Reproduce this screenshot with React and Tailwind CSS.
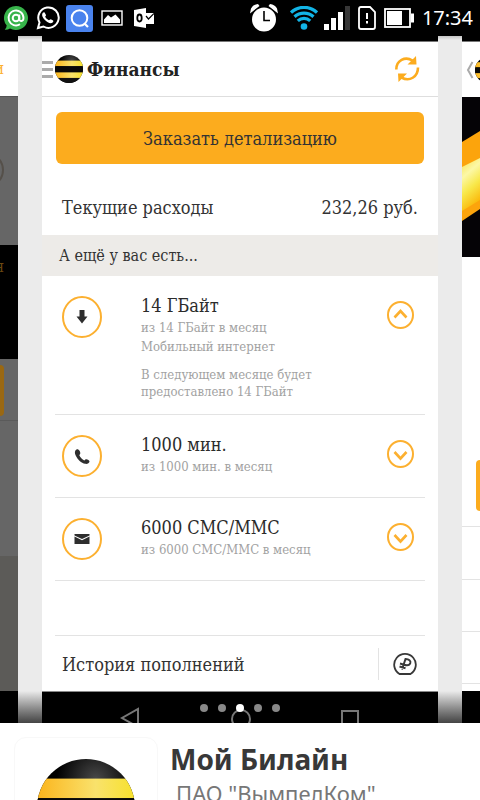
import React, { useState } from "react";

const serif = "font-['DejaVu_Serif_Condensed','Liberation_Serif',serif]";

const items = [
  {
    icon: "data",
    title: "14 ГБайт",
    lines: ["из 14 ГБайт в месяц", "Мобильный интернет"],
    note: ["В следующем месяце будет", "предоставлено 14 ГБайт"],
  },
  { icon: "phone", title: "1000 мин.", lines: ["из 1000 мин. в месяц"] },
  { icon: "mail", title: "6000 СМС/ММС", lines: ["из 6000 СМС/ММС в месяц"] },
];

const BeeLogo = ({ className, id }) => (
  <svg viewBox="0 0 100 100" className={className} aria-hidden="true">
    <defs>
      <clipPath id={`${id}-clip`}>
        <circle cx="50" cy="50" r="50" />
      </clipPath>
      <linearGradient id={`${id}-yellow`}>
        <stop offset="0" stopColor="#fbb41c" />
        <stop offset="0.6" stopColor="#f9e26c" />
        <stop offset="1" stopColor="#f7e12c" />
      </linearGradient>
      <radialGradient id={`${id}-black`} cx="0.6" cy="0.2" r="0.4">
        <stop offset="0" stopColor="#484848" />
        <stop offset="1" stopColor="#000" />
      </radialGradient>
    </defs>
    <g clipPath={`url(#${id}-clip)`}>
      <rect width="100" height="100" fill={`url(#${id}-black)`} />
      <rect y="20" width="100" height="20" fill={`url(#${id}-yellow)`} />
      <rect y="40" width="100" height="22" fill="#080808" />
      <rect y="62" width="100" height="20" fill={`url(#${id}-yellow)`} />
      <rect y="82" width="100" height="18" fill="#111" />
    </g>
  </svg>
);

const StatusBar = () => (
  <header className="flex h-9 shrink-0 items-center justify-between bg-black pl-1 pr-[7px] text-white">
    <div className="flex items-center">
      <svg viewBox="0 0 24 24" className="size-6" aria-hidden="true">
        <path d="M12 0a12 12 0 1 1-6 22.4Q3.500 24 .7 23.600 2.700 21.500 2.700 19.500A12 12 0 0 1 12 0z" fill="#37b34a" />
        <circle cx="12" cy="12" r="3.300" fill="none" stroke="#fff" strokeWidth="2" />
        <path d="M15.300 8.500v4.500c0 3 4.200 2.800 4.200-1a7.500 7.500 0 1 0-3.500 6.300" fill="none" stroke="#fff" strokeWidth="1.900" />
      </svg>
      <svg viewBox="0 0 24 24" className="ml-2 size-6" aria-hidden="true">
        <path d="M2 22l1.500-5.600A10.200 10.200 0 1 1 7.500 20.500z" fill="none" stroke="#fff" strokeWidth="2" />
        <path d="M8.600 6.500c-.5-.5-1.200-.3-1.700.3-1.600 1.900-.5 4.700 2 7.300 2.700 2.700 5.800 4 7.700 2.400.7-.6 1-1.500.5-2l-2.300-1.300c-.5-.2-1.400 1-1.900 1-1.500-.5-3.200-2.100-3.700-3.600 0-.4 1-1 .8-1.700z" fill="#fff" />
      </svg>
      <svg viewBox="0 0 27 27" className="ml-1.5 size-[27px]" aria-hidden="true">
        <rect width="27" height="27" rx="3" fill="#4a83ee" />
        <circle cx="13.500" cy="13" r="7.800" fill="none" stroke="#fff" strokeWidth="2" />
        <path d="M18.500 18.500l3.500 3.500" stroke="#fff" strokeWidth="2.200" />
      </svg>
      <svg viewBox="0 0 22 16" className="ml-2 h-4 w-[22px]" aria-hidden="true">
        <rect x="1" y="1" width="20" height="14" fill="none" stroke="#fff" strokeWidth="1.400" />
        <path d="M3 13v-3.500l4-4.500 3 2.500 4.500-3 4.500 5v3.500z" fill="#fff" />
      </svg>
      <svg viewBox="0 0 20 20" className="ml-[11px] size-5" aria-hidden="true">
        <path d="M0 2l12-2v20L0 18z" fill="#fff" />
        <ellipse cx="5.500" cy="10" rx="2.200" ry="3.500" fill="none" stroke="#000" strokeWidth="1.800" />
        <path d="M12 5h8v11h-8z" fill="#fff" />
        <path d="M12 8l2.500 3L20 5.500" fill="none" stroke="#000" strokeWidth="1.200" />
      </svg>
    </div>
    <div className="flex items-center">
      <svg viewBox="0 0 28 28" className="size-7" aria-hidden="true">
        <path d="M0 9.500L1 4.500Q3 .5 8 0l1.500 2zM28 9.500L27 4.500Q25 .5 20 0l-1.500 2z" fill="#fff" />
        <circle cx="14" cy="15.500" r="13" fill="#000" />
        <circle cx="14" cy="15.500" r="12" fill="#fff" />
        <path d="M14 7v9.500h6" fill="none" stroke="#000" strokeWidth="1.600" />
      </svg>
      <svg viewBox="0 0 28 24" className="ml-3 h-6 w-7" fill="none" stroke="#12b4e6" strokeWidth="3.200" aria-hidden="true">
        <path d="M1 6.500a19 19 0 0 1 26 0M4.500 10.800a14 14 0 0 1 19 0M7.800 14.800a9 9 0 0 1 12.400 0" />
        <circle cx="14" cy="20.500" r="3.300" fill="#12b4e6" stroke="none" />
      </svg>
      <svg viewBox="0 0 26 24" className="ml-1.5 h-6 w-[26px]" fill="#fff" aria-hidden="true">
        <path d="M0 18h5v6H0zM7 12h5v12H7zM14 6h5v18h-5z" />
        <path d="M21 0h5v24h-5z" fill="#373737" />
      </svg>
      <svg viewBox="0 0 18 24" className="ml-2 h-6 w-[18px]" fill="none" stroke="#fff" aria-hidden="true">
        <path d="M3 1h9l5 5v15q0 2-2 2H3q-2 0-2-2V3q0-2 2-2z" strokeWidth="1.800" />
        <path d="M9 7v6M9 15v2.500" strokeWidth="2" />
      </svg>
      <svg viewBox="0 0 30 20" className="ml-2 h-5 w-[30px]" aria-hidden="true">
        <rect x="1" y="1" width="25" height="18" fill="none" stroke="#fff" strokeWidth="1.800" />
        <path d="M3 3h15v14H3zM27 5.500h3v9h-3z" fill="#fff" />
      </svg>
      <time className="ml-2 font-['Noto_Sans',sans-serif] text-xl leading-6">17:34</time>
    </div>
  </header>
);

const ItemIcon = ({ name }) => (
  <svg viewBox="0 0 40 42" className="mt-5 h-[42px] w-10 shrink-0" aria-hidden="true">
    <ellipse cx="20" cy="21" rx="19" ry="20" fill="#fff" stroke="#fcb030" strokeWidth="2" />
    {name === "data" && <path d="M17.500 14h5v6.500h3L20 27.500l-5.500-7h3z" fill="#2e2e2e" />}
    {name === "phone" && (
      <path d="M14.500 14.500c-2 1-2 3.500-.8 6 2 4.200 5.500 7.500 9.500 8.300 2 .4 4-.4 4.300-2.200.1-1.500-2.500-2.800-3.800-2.400l-1.400 1.200c-2-.8-4.200-3-5-5.100l1-1.700c.3-1.700-1.600-5-3.800-4.100z" fill="#2e2e2e" />
    )}
    {name === "mail" && (
      <g fill="#2e2e2e">
        <path d="M12.500 16h15v1.500L20 21l-7.500-3.500z" />
        <path d="M12.500 18.500L20 22.300l7.500-3.800V26h-15z" />
      </g>
    )}
  </svg>
);

const ItemRow = ({ item, open, onToggle }) => (
  <li className="mx-[13px] flex min-h-[83px] items-start border-b border-[#e3e3e3] pl-[7px] pr-[11px]">
    <ItemIcon name={item.icon} />
    <div className="ml-[39px] flex-1 pt-[18px] pb-3.5">
      <h3 className="text-lg leading-6 text-[#2b2b2b]">{item.title}</h3>
      {item.lines.map((line) => (
        <p key={line} className="text-[13px] leading-[19px] text-[#a2a2a2]">{line}</p>
      ))}
      {open && item.note && (
        <div className="mt-2.5 text-[13px] leading-[17px] text-[#a2a2a2]">
          {item.note.map((line) => (
            <p key={line}>{line}</p>
          ))}
        </div>
      )}
    </div>
    <button type="button" aria-label={item.title} aria-expanded={open} onClick={onToggle} className="mt-[25px] shrink-0">
      <svg viewBox="0 0 27 28" className="h-7 w-[27px]" fill="none" stroke="#fcb030" aria-hidden="true">
        <ellipse cx="13.500" cy="14" rx="12.500" ry="13" strokeWidth="2" />
        <path d={open ? "M7.500 16.500l6-6.500 6 6.500" : "M7.500 12l6 6.500 6-6.500"} strokeWidth="2.600" />
      </svg>
    </button>
  </li>
);

const PrevSlide = () => (
  <div className={`flex w-[18px] shrink-0 flex-col overflow-hidden bg-[#666] ${serif}`}>
    <div className="h-1.5 border-b border-[#777] bg-black" />
    <div className="flex h-[55px] items-center justify-end border-b border-[#555] bg-white pr-3.5 text-base text-[#fcb030]">и</div>
    <div className="h-[148px] pt-14">
      <svg viewBox="0 0 18 34" className="h-[34px] w-[18px]" fill="none" stroke="#55504a" strokeWidth="2" aria-hidden="true">
        <circle cx="-14" cy="17" r="17" />
      </svg>
    </div>
    <div className="flex h-[114px] justify-end bg-black pt-2.5 pr-3.5 text-base text-[#6b4810]">я</div>
    <div className="h-[62px] border-b border-[#5a5a5a] pt-1.5">
      <div className="h-[51px] w-1 rounded-r bg-[#9a6812]" />
    </div>
    <div className="h-[135px]" />
    <div className="flex-1 bg-[#5c5b58]" />
    <div className="h-8 bg-black" />
  </div>
);

const NextSlide = () => (
  <div className="flex w-[18px] shrink-0 flex-col overflow-hidden bg-white">
    <div className="h-1.5 border-b border-[#777] bg-black" />
    <div className="flex h-[55px] items-center pl-1">
      <svg viewBox="0 0 8 18" className="h-[18px] w-2 shrink-0" fill="none" stroke="#aaa" strokeWidth="2" aria-hidden="true">
        <path d="M6.500 1L2 9l4.500 8" />
      </svg>
      <BeeLogo id="next" className="ml-px size-[26px] shrink-0" />
    </div>
    <svg viewBox="0 0 18 160" className="h-40 w-[18px] shrink-0 bg-[#050306]" aria-hidden="true">
      <defs>
        <linearGradient id="beam" x1="0" y1="0" x2="0.3" y2="1">
          <stop offset="0" stopColor="#f9e24d" />
          <stop offset="0.35" stopColor="#fcf8a6" />
          <stop offset="0.65" stopColor="#f8e84a" />
          <stop offset="1" stopColor="#fbb90c" />
        </linearGradient>
      </defs>
      <path d="M0 45L18 34v78L0 124z" fill="#fca40c" />
      <path d="M0 70L18 61v42L0 114z" fill="url(#beam)" />
    </svg>
    <div className="h-[270px] border-b border-[#e3e3e3] pt-[203px]">
      <div className="ml-3.5 h-[51px] rounded-l bg-[#fcac1e]" />
    </div>
    <div className="h-[53px] border-b border-[#e3e3e3]" />
    <div className="h-[52px] border-b border-[#e3e3e3]" />
    <div className="h-[52px] border-b border-[#e3e3e3]" />
    <div className="flex-1" />
    <div className="h-8 bg-black" />
  </div>
);

const Gutter = () => (
  <div className="flex w-6 shrink-0 flex-col justify-between bg-[#ebebeb]">
    <div className="h-1 bg-linear-to-b from-[#c4c4c4] to-[#ebebeb]" />
    <div className="h-8 bg-linear-to-b from-[#ebebeb] to-[#444]" />
  </div>
);

const FinanceScreen = () => {
  const [openItem, setOpenItem] = useState("14 ГБайт");

  return (
    <section className={`min-w-0 flex-1 bg-white text-[#333] ${serif}`}>
      <div className="h-1.5 border-b border-[#777] bg-black" />
      <div className="flex h-[55px] items-center border-b border-[#dedede] pr-[18px]">
        <button type="button" aria-label="Меню" className="flex w-[11px] flex-col gap-1">
          <span className="h-[3px] bg-[#aaa]" />
          <span className="h-[3px] bg-[#aaa]" />
          <span className="h-[3px] bg-[#aaa]" />
        </button>
        <BeeLogo id="head" className="ml-0.5 size-7" />
        <h1 className="ml-1 text-[19px] font-bold text-[#222]">Финансы</h1>
        <button type="button" aria-label="Обновить" className="ml-auto">
          <svg viewBox="0 0 26 28" className="h-7 w-[26px]" fill="none" stroke="#fcac1e" strokeWidth="2.600" aria-hidden="true">
            <path d="M2.300 14.500C2.300 5.500 11 1 18.500 5.500M24 12.500C24 22 15.500 27 7.500 22.500" />
            <path d="M22 1l.5 8.500H13.500zM4.500 27L4 18.500h9z" fill="#fcac1e" stroke="none" />
          </svg>
        </button>
      </div>

      <div className="px-3.5 pt-[15px]">
        <button type="button" className="h-[52px] w-full rounded-md bg-[#fcac1e] pt-0.5 text-lg">
          Заказать детализацию
        </button>
      </div>
      <div className="flex h-[71px] items-center justify-between pl-5 pr-5 pt-4 text-lg">
        <span>Текущие расходы</span>
        <span>232,26 руб.</span>
      </div>
      <h2 className="flex h-[41px] items-center bg-[#edebe8] pl-[17px] text-base">А ещё у вас есть...</h2>

      <ul className="pb-[54px]">
        {items.map((item) => (
          <ItemRow
            key={item.title}
            item={item}
            open={openItem === item.title}
            onToggle={() => setOpenItem(openItem === item.title ? null : item.title)}
          />
        ))}
      </ul>

      <div className="mx-[13px] flex h-14 items-center border-t border-[#e3e3e3] pl-[7px] pr-2">
        <span className="flex-1 pt-0.5 text-lg">История пополнений</span>
        <span className="h-8 w-px bg-[#e3e3e3]" />
        <button type="button" aria-label="Пополнить" className="ml-3.5">
          <svg viewBox="0 0 24 24" className="size-6" fill="none" stroke="#383838" strokeWidth="1.800" aria-hidden="true">
            <path d="M6.500 22a10.800 10.800 0 1 1 11 0z" />
            <path d="M9 17.500L12.500 7c3.500.3 5.500 1.500 4.800 4-.7 2.300-3 2.700-6.300 1.700l-4-1.200M6.500 14.500l6 1.800" strokeWidth="2" />
          </svg>
        </button>
      </div>

      <div className="flex h-8 items-start justify-between border-t border-[#888] bg-black pl-[78px] pr-[79px] pt-[15px]">
        <svg viewBox="0 0 20 16" className="h-4 w-5" fill="none" stroke="#777" strokeWidth="2" aria-hidden="true">
          <path d="M18 20V2L2 11l16 9" />
        </svg>
        <svg viewBox="0 0 20 16" className="h-4 w-5" fill="none" stroke="#777" strokeWidth="2" aria-hidden="true">
          <circle cx="10" cy="12" r="9" />
        </svg>
        <svg viewBox="0 0 18 16" className="h-4 w-[18px]" fill="none" stroke="#777" strokeWidth="2" aria-hidden="true">
          <rect x="1" y="4" width="16" height="16" />
        </svg>
      </div>
    </section>
  );
};

const App = () => {
  return (
    <div className="flex h-screen flex-col overflow-hidden bg-white">
      <StatusBar />

      <main className="relative flex shrink-0">
        <PrevSlide />
        <Gutter />
        <FinanceScreen />
        <Gutter />
        <NextSlide />
        {/* carousel dots sit over the current slide */}
        <div className="absolute inset-x-0 bottom-[11px] flex justify-center gap-2.5">
          {[0, 1, 2, 3, 4].map((i) => (
            <span key={i} className={`size-2 rounded-full ${i === 2 ? "bg-white" : "bg-[#888]"}`} />
          ))}
        </div>
      </main>

      <footer className="flex shrink-0 items-start pl-3.5 pt-3.5 font-['Noto_Sans',sans-serif]">
        <div className="h-36 w-36 shrink-0 rounded-xl border border-[#f8f8f8] px-[22px] pt-[21px]">
          <BeeLogo id="app" className="w-full" />
        </div>
        <div className="ml-3 pt-1">
          <h2 className="text-[28px] leading-9 font-bold text-[#383838]">Мой Билайн</h2>
          <p className="pl-1.5 text-[22px] leading-8 text-[#777]">ПАО "ВымпелКом"</p>
        </div>
      </footer>
    </div>
  );
};

export default App;
